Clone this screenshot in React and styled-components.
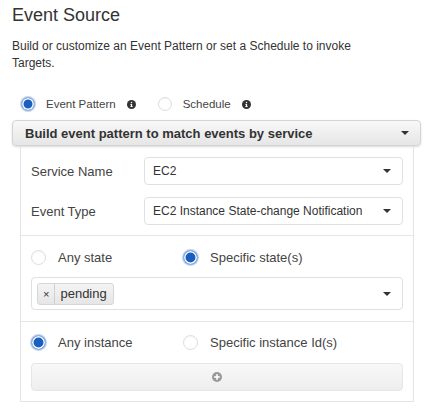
import React from 'react';
import styled, { createGlobalStyle } from 'styled-components';

const Global = createGlobalStyle`
  body {
    margin: 0;
    background: #fff;
    font-family: 'Liberation Sans', Arial, sans-serif;
    color: #444;
  }
`;

const Page = styled.div`
  width: 429px;
  height: 413px;
  padding: 0 8px 0 12px;
  box-sizing: border-box;
  overflow: hidden;
`;

const Heading = styled.h2`
  margin: 0;
  padding-top: 4px;
  font-size: 18px;
  font-weight: normal;
  color: #333;
  line-height: 22px;
`;

const Intro = styled.p`
  margin: 12px 0 0;
  font-size: 12px;
  line-height: 17px;
  color: #333;
`;

const RadioRow = styled.div`
  display: flex;
  align-items: center;
  gap: ${(p) => p.$gap || 0}px;
  height: 20px;
  margin: ${(p) => p.$margin || '0'};
`;

const RadioLabel = styled.label`
  display: flex;
  align-items: center;
  flex-shrink: 0;
  gap: ${(p) => p.$gap || 12}px;
  font-size: ${(p) => p.$size || 13}px;
  color: #444;
  width: ${(p) => (p.$width ? `${p.$width}px` : 'auto')};
`;

const Dot = styled.span`
  width: ${(p) => p.$d || 15}px;
  height: ${(p) => p.$d || 15}px;
  border-radius: 50%;
  box-sizing: border-box;
  flex-shrink: 0;
  border: 1px solid ${(p) => (p.$on ? '#9bb8e0' : '#ddd')};
  background: ${(p) => (p.$on ? '#1a5fc0' : '#fff')};
  box-shadow: ${(p) => (p.$on ? 'inset 0 0 0 1.5px #fff, 0 0 0 1px #c4d6ef' : 'inset 0 1px 1px rgba(0,0,0,0.04)')};
`;

const Info = () => (
  <svg width="9" height="9" viewBox="0 0 16 16">
    <circle cx="8" cy="8" r="8" fill="#333" />
    <rect x="6.9" y="7" width="2.2" height="5.5" fill="#fff" />
    <rect x="5.9" y="11" width="4.2" height="1.5" fill="#fff" />
    <rect x="5.9" y="7" width="2" height="1.4" fill="#fff" />
    <circle cx="8" cy="4.6" r="1.3" fill="#fff" />
  </svg>
);

const Caret = styled.span`
  width: 0;
  height: 0;
  border-left: 4px solid transparent;
  border-right: 4px solid transparent;
  border-top: 4px solid #333;
`;

const PatternBar = styled.div`
  margin-top: 6px;
  height: 26px;
  box-sizing: border-box;
  width: 409px;
  border: 1px solid #d4d4d4;
  border-radius: 4px;
  background: linear-gradient(#f8f8f8, #e6e6e6);
  box-shadow: 0 1px 2px rgba(0, 0, 0, 0.15);
  display: flex;
  align-items: center;
  justify-content: space-between;
  padding: 0 11px 0 12px;
  font-size: 13px;
  font-weight: bold;
  color: #333;
`;

const Panel = styled.div`
  margin-left: 8px;
  width: 394px;
  border: 1px solid #e4e4e4;
  border-top: none;
  box-sizing: border-box;
`;

const Section = styled.div`
  padding: ${(p) => p.$pad};
  border-top: ${(p) => (p.$divider ? '1px solid #e6e6e6' : 'none')};
  display: flex;
  flex-direction: column;
  gap: ${(p) => p.$gap}px;
`;

const FieldRow = styled.div`
  display: flex;
  align-items: center;
`;

const FieldLabel = styled.span`
  width: 113px;
  font-size: 13px;
  color: #444;
`;

const Select = styled.div`
  flex: 1;
  height: 28px;
  box-sizing: border-box;
  border: 1px solid #e0e0e0;
  border-radius: 4px;
  background: #fff;
  display: flex;
  align-items: center;
  justify-content: space-between;
  padding: 0 11px 0 8px;
  font-size: 12px;
  color: #333;
`;

const TagBox = styled(Select)`
  flex: none;
  height: 33px;
  padding-left: 5px;
`;

const Tag = styled.span`
  display: flex;
  align-items: center;
  height: 22px;
  box-sizing: border-box;
  border: 1px solid #d6d6d6;
  border-radius: 3px;
  background: linear-gradient(#f4f4f4, #e6e6e6);
  font-size: 13px;
  color: #333;
`;

const TagX = styled.span`
  padding: 0 5px;
  font-size: 11px;
  border-right: 1px solid #d0d0d0;
  line-height: 20px;
`;

const TagText = styled.span`
  padding: 0 6px 0 5px;
`;

const AddButton = styled.div`
  height: 28px;
  box-sizing: border-box;
  border: 1px solid #e6e6e6;
  border-radius: 4px;
  background: linear-gradient(#f8f8f8, #eeeeee);
  display: flex;
  align-items: center;
  justify-content: center;
`;

const Plus = () => (
  <svg width="10" height="10" viewBox="0 0 10 10">
    <circle cx="5" cy="5" r="5" fill="#9a9a9a" />
    <rect x="4.2" y="2.2" width="1.6" height="5.6" fill="#fff" />
    <rect x="2.2" y="4.2" width="5.6" height="1.6" fill="#fff" />
  </svg>
);

export default function App() {
  return (
    <Page>
      <Global />
      <Heading>Event Source</Heading>
      <Intro>
        Build or customize an Event Pattern or set a Schedule to invoke
        <br />
        Targets.
      </Intro>
      <RadioRow $margin="22px 0 0 9px" $gap={22}>
        <RadioLabel $gap={11} $size={11.5}>
          <Dot $on $d={14} />
          <span>Event Pattern</span>
          <Info />
        </RadioLabel>
        <RadioLabel $gap={11} $size={11.5}>
          <Dot $d={14} />
          <span>Schedule</span>
          <Info />
        </RadioLabel>
      </RadioRow>
      <PatternBar>
        <span>Build event pattern to match events by service</span>
        <Caret />
      </PatternBar>
      <Panel>
        <Section $pad="11px 10px 10px" $gap={12}>
          <FieldRow>
            <FieldLabel>Service Name</FieldLabel>
            <Select>
              <span>EC2</span>
              <Caret />
            </Select>
          </FieldRow>
          <FieldRow>
            <FieldLabel>Event Type</FieldLabel>
            <Select>
              <span>EC2 Instance State-change Notification</span>
              <Caret />
            </Select>
          </FieldRow>
        </Section>
        <Section $divider $pad="11px 10px 11px" $gap={10}>
          <RadioRow>
            <RadioLabel $width={152}>
              <Dot />
              <span>Any state</span>
            </RadioLabel>
            <RadioLabel>
              <Dot $on />
              <span>Specific state(s)</span>
            </RadioLabel>
          </RadioRow>
          <TagBox>
            <Tag>
              <TagX>×</TagX>
              <TagText>pending</TagText>
            </Tag>
            <Caret />
          </TagBox>
        </Section>
        <Section $divider $pad="10px 10px 10px" $gap={11}>
          <RadioRow>
            <RadioLabel $width={152}>
              <Dot $on />
              <span>Any instance</span>
            </RadioLabel>
            <RadioLabel>
              <Dot />
              <span>Specific instance Id(s)</span>
            </RadioLabel>
          </RadioRow>
          <AddButton>
            <Plus />
          </AddButton>
        </Section>
      </Panel>
    </Page>
  );
}
